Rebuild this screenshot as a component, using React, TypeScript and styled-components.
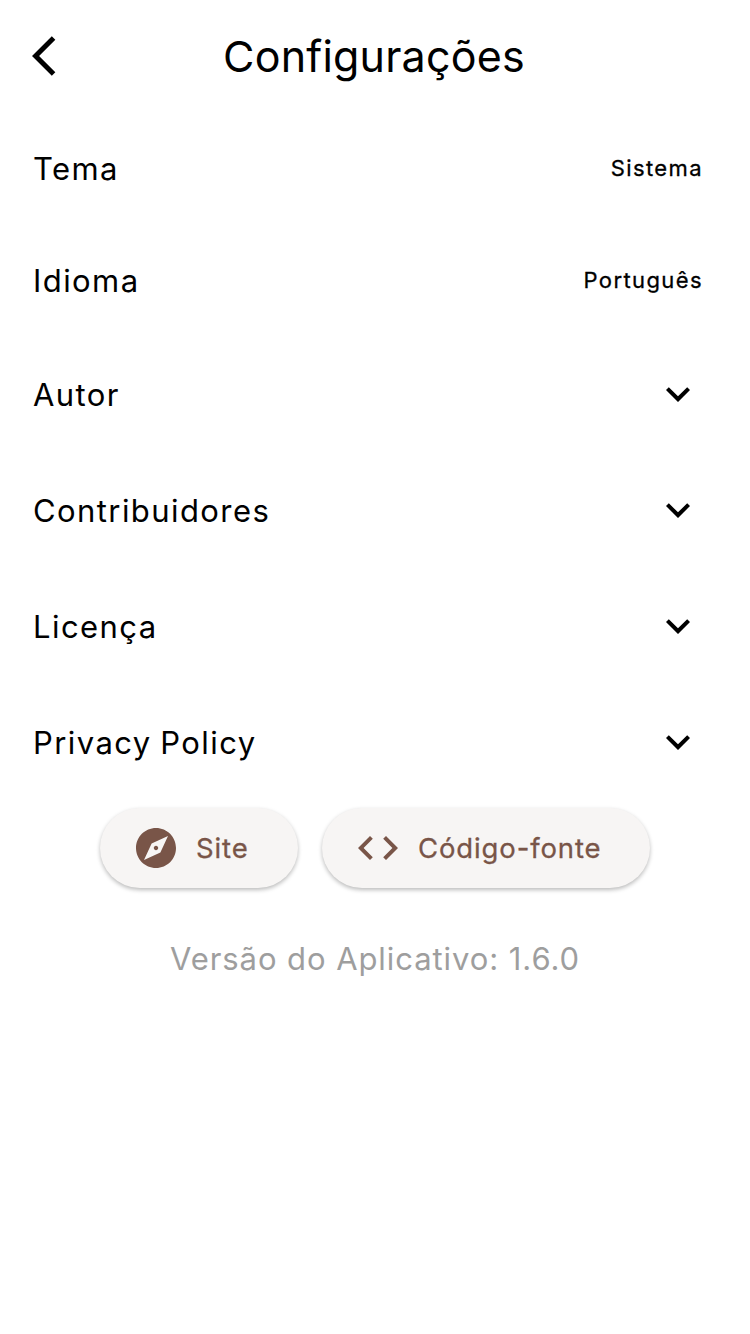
import React from 'react';
import styled, { createGlobalStyle } from 'styled-components';

const Global = createGlobalStyle`
  * { box-sizing: border-box; }
  body { margin: 0; background: #fff; color: #000; font-family: Inter, "Liberation Sans", sans-serif; }
`;

const Screen = styled.main`
  width: 750px;
  min-height: 1334px;
  display: flex;
  flex-direction: column;
  background: #fff;
`;

const Header = styled.header`
  height: 112px;
  display: grid;
  grid-template-columns: 112px 1fr 112px;
  align-items: center;
`;

const BackButton = styled.button`
  width: 112px;
  height: 112px;
  padding: 0 0 0 32px;
  border: 0;
  background: none;
  text-align: left;
  svg { display: block; }
`;

const Title = styled.h1`
  margin: 0;
  padding-right: 2px;
  font-size: 43px;
  font-weight: 400;
  letter-spacing: 0.2px;
  line-height: 56px;
  text-align: center;
  white-space: nowrap;
`;

const Row = styled.div<{ $height: number }>`
  height: ${(p) => p.$height}px;
  padding: 0 48px 0 33px;
  display: flex;
  align-items: center;
  justify-content: space-between;
`;

const Label = styled.span`
  padding-top: 2px;
  font-size: 31px;
  font-weight: 400;
  line-height: 48px;
  letter-spacing: 1.42px;
  word-spacing: -1.5px;
`;

const Value = styled.span`
  margin-right: -1px;
  font-size: 22px;
  font-weight: 400;
  line-height: 32px;
  letter-spacing: 1.4px;
  -webkit-text-stroke: 0.3px currentColor;
`;

const Chevron = styled.svg`
  width: 48px;
  height: 48px;
`;

const Actions = styled.div`
  display: flex;
  justify-content: center;
  gap: 24px;
  padding-top: 8px;
`;

const Pill = styled.button<{ $width: number }>`
  width: ${(p) => p.$width}px;
  height: 80px;
  padding: 0 0 0 32px;
  border: 0;
  border-radius: 40px;
  display: flex;
  align-items: center;
  gap: 16px;
  background: #f7f5f4;
  color: #795548;
  box-shadow: 0 2px 4px rgba(0, 0, 0, 0.27);
  font: 400 27.5px/40px Inter, "Liberation Sans", sans-serif;
  letter-spacing: 0.88px;
`;

const PillText = styled.span`
  -webkit-text-stroke: 0.3px currentColor;
`;

const Version = styled.p`
  margin: 47px 0 0;
  color: #9e9e9e;
  font-size: 31px;
  font-weight: 400;
  line-height: 48px;
  letter-spacing: 0.93px;
  text-align: center;
`;

const Expandable = ({ label }: { label: string }) => (
  <Row $height={116}>
    <Label>{label}</Label>
    <Chevron viewBox="0 0 24 24"><path d="M16.59 8.59 12 13.17 7.41 8.59 6 10l6 6 6-6z" /></Chevron>
  </Row>
);

export default function App() {
  return (
    <>
      <Global />
      <Screen>
        <Header>
          <BackButton aria-label="Voltar">
            <svg width="48" height="48" viewBox="0 0 24 24"><path d="M11.67 3.87 9.9 2.1 0 12l9.9 9.9 1.77-1.77L3.54 12z" /></svg>
          </BackButton>
          <Title>Configurações</Title>
        </Header>
        <Row $height={112}><Label>Tema</Label><Value>Sistema</Value></Row>
        <Row $height={112}><Label>Idioma</Label><Value>Português</Value></Row>
        <Expandable label="Autor" />
        <Expandable label="Contribuidores" />
        <Expandable label="Licença" />
        <Expandable label="Privacy Policy" />
        <Actions>
          <Pill $width={198}>
            <svg width="48" height="48" viewBox="0 0 24 24" fill="currentColor"><path d="M12 10.9c-.61 0-1.1.49-1.1 1.1s.49 1.1 1.1 1.1c.61 0 1.1-.49 1.1-1.1s-.49-1.1-1.1-1.1zM12 2C6.48 2 2 6.48 2 12s4.48 10 10 10 10-4.48 10-10S17.52 2 12 2zm2.19 12.19L6 18l3.81-8.19L18 6l-3.81 8.19z" /></svg>
            <PillText>Site</PillText>
          </Pill>
          <Pill $width={328}>
            <svg width="48" height="48" viewBox="0 0 24 24" fill="currentColor"><path d="M9.4 16.6 4.8 12l4.6-4.6L8 6l-6 6 6 6 1.4-1.4zm5.2 0 4.6-4.6-4.6-4.6L16 6l6 6-6 6-1.4-1.4z" /></svg>
            <PillText>Código-fonte</PillText>
          </Pill>
        </Actions>
        <Version>Versão do Aplicativo: 1.6.0</Version>
      </Screen>
    </>
  );
}
